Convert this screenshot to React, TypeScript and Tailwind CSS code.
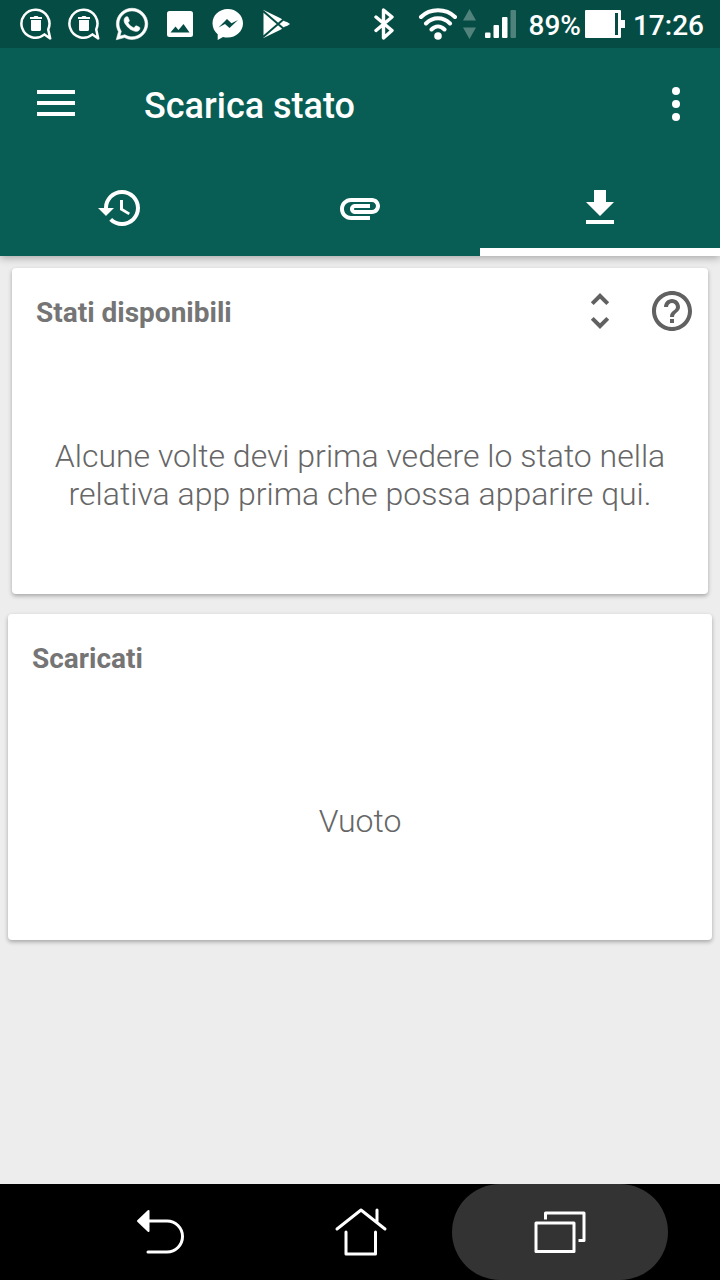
import { useState } from 'react'
import type { ReactNode } from 'react'
import { FaWhatsapp } from 'react-icons/fa'

interface Tab {
  id: string
  label: string
  path: string
}

const TABS: Tab[] = [
  {
    id: 'history',
    label: 'Cronologia',
    path: 'M13 3c-4.97 0-9 4.03-9 9H1l3.89 3.89.07.14L9 12H6c0-3.87 3.13-7 7-7s7 3.13 7 7-3.13 7-7 7c-1.93 0-3.68-.79-4.94-2.06l-1.42 1.42C8.27 19.99 10.51 21 13 21c4.97 0 9-4.03 9-9s-4.03-9-9-9zm-1 5v5l4.28 2.54.72-1.21-3.5-2.08V8H12z',
  },
  {
    id: 'attachments',
    label: 'Allegati',
    path: 'M2 12.5C2 9.46 4.46 7 7.5 7H18c2.21 0 4 1.79 4 4s-1.79 4-4 4H9.5C8.12 15 7 13.88 7 12.5S8.12 10 9.5 10H17v2H9.41c-.55 0-.55 1 0 1H18c1.1 0 2-.9 2-2s-.9-2-2-2H7.5C5.57 9 4 10.57 4 12.5S5.57 16 7.5 16H17v2H7.5C4.46 18 2 15.54 2 12.5z',
  },
  {
    id: 'download',
    label: 'Scarica',
    path: 'M19 9h-4V3H9v6H5l7 7 7-7zM5 18v2h14v-2H5z',
  },
]

const UNFOLD =
  'M12 5.83L15.17 9l1.41-1.41L12 3 7.41 7.59 8.83 9 12 5.83zm0 12.34L8.83 15l-1.41 1.41L12 21l4.59-4.59L15.17 15 12 18.17z'
const HELP =
  'M11 18h2v-2h-2v2zm1-16C6.48 2 2 6.48 2 12s4.48 10 10 10 10-4.48 10-10S17.52 2 12 2zm0 18c-4.41 0-8-3.59-8-8s3.59-8 8-8 8 3.59 8 8-3.59 8-8 8zm0-14c-2.21 0-4 1.79-4 4h2c0-1.1.9-2 2-2s2 .9 2 2c0 2-3 1.75-3 5h2c0-2.25 3-2.5 3-5 0-2.21-1.79-4-4-4z'

function Icon({ path }: { path: string }) {
  return (
    <svg className="size-12" viewBox="0 0 24 24" fill="currentColor">
      <path d={path} />
    </svg>
  )
}

function TrashBubble() {
  return (
    <svg className="size-8" viewBox="0 0 32 32" fill="none">
      <path
        d="M24.5 26.4A14 14 0 1 1 28.2 21.5L30.2 30.4Z"
        stroke="currentColor"
        strokeWidth="2.5"
        strokeLinejoin="round"
      />
      <path
        d="M10 9h3.5l1-1h3l1 1H22v2H10zM11 12h10v9.500a1.500 1.500 0 0 1-1.500 1.500h-7a1.500 1.500 0 0 1-1.500-1.500z"
        fill="currentColor"
      />
    </svg>
  )
}

function StatusBar() {
  return (
    <div className="flex h-12 items-center justify-between bg-[#054d44] pl-5 pr-4 text-white">
      <div className="flex items-center gap-4">
        <TrashBubble />
        <TrashBubble />
        <span className="flex size-8 items-center justify-center">
          <FaWhatsapp className="size-9 shrink-0" stroke="currentColor" strokeWidth="8" />
        </span>
        <svg className="size-8" viewBox="0 0 32 32" fill="currentColor">
          <path
            fillRule="evenodd"
            d="M5.500 3h21a2.500 2.500 0 0 1 2.500 2.500v21a2.500 2.500 0 0 1-2.500 2.500h-21a2.500 2.500 0 0 1-2.500-2.500v-21a2.500 2.500 0 0 1 2.500-2.500zM6.500 24.500h19l-6-8.500-5 6-3-3.500z"
          />
        </svg>
        <svg className="size-8" viewBox="0 0 32 32" fill="currentColor">
          <path
            fillRule="evenodd"
            d="M15.7 1C7 1 .5 7.500.5 15.300c0 4.700 2 8.400 5.200 10.900V32l5.300-3c1.500.4 3 .6 4.700.6C24.300 29.600 31 23.200 31 15.300S24.300 1 15.700 1zM6.500 19.500l8.500-8.500 4.500 4.300 6.500-3.300-8.500 8-4.500-4z"
          />
        </svg>
        <svg className="size-8" viewBox="0 0 32 32">
          <path d="M3.500 2v28l17.500-8.500 4-3 2-.5 3-2-3-2-2-.5-4-3z" fill="currentColor" />
          <path d="M3 3l21.500 18.500M3 29L24.500 10.500" stroke="#054d44" strokeWidth="2" />
        </svg>
      </div>

      <div className="flex items-center text-[28px] font-medium leading-8">
        <svg
          className="mr-5 h-8 w-7"
          viewBox="-1 0 28 32"
          fill="none"
          stroke="currentColor"
          strokeWidth="3.400"
          strokeLinejoin="round"
          strokeLinecap="round"
        >
          <path d="M6 9L22 22.500l-8.500 7.500V2L22 9 6 22.500" />
        </svg>
        <svg
          className="mr-1 h-8 w-10"
          viewBox="-1 0 40 32"
          fill="none"
          stroke="currentColor"
          strokeWidth="4"
          strokeLinecap="round"
        >
          <path d="M3 9c9-9 25-9 34 0M8 15.500c7-7 17-7 24 0M13.500 21.500c4-4 9-4 13 0" />
          <circle cx="20" cy="28" r="3.800" fill="currentColor" stroke="none" />
        </svg>
        <svg className="mr-2 h-8 w-4 opacity-30" viewBox="-1 0 16 32" fill="currentColor">
          <path d="M7.500 1L14 12.500H1zM1 19.500h13L7.500 31z" />
        </svg>
        <svg className="mr-3 h-8 w-8" viewBox="1 0 32 32" fill="currentColor">
          <rect x="1" y="24.500" width="5.500" height="5.500" rx="1" />
          <rect x="9.500" y="17" width="5.500" height="13" rx="1" />
          <rect x="18" y="9" width="5.500" height="21" rx="1" />
          <rect x="26.500" y="2" width="5.500" height="28" rx="1" opacity=".3" />
        </svg>
        <span className="pt-1">89%</span>
        <svg className="ml-1 mr-2 h-8 w-10" viewBox="0 0 40 32" fill="currentColor">
          <path
            fillRule="evenodd"
            d="M1 2h34a1 1 0 0 1 1 1v9h4v8h-4v9a1 1 0 0 1-1 1H1a1 1 0 0 1-1-1V3a1 1 0 0 1 1-1zM30 5v22h3V5z"
          />
        </svg>
        <span className="pt-1">17:26</span>
      </div>
    </div>
  )
}

interface CardProps {
  title: string
  actions?: ReactNode
  children: ReactNode
}

function Card({ title, actions, children }: CardProps) {
  return (
    <section className="rounded bg-white shadow-[0_2px_4px_rgba(0,0,0,0.3)]">
      <div className="flex h-[88px] items-center justify-between pb-0.5 pl-6 pr-3">
        <h2 className="pt-1 text-[28px] font-bold leading-8 text-[#757575]">{title}</h2>
        {actions}
      </div>
      <div className="flex min-h-[238px] items-center justify-center px-8">
        <p className="text-center text-[32px] font-light leading-[38px] text-[#666666]">{children}</p>
      </div>
    </section>
  )
}

function NavigationBar() {
  return (
    <nav className="mt-auto grid h-24 grid-cols-3 bg-black px-[60px] text-white">
      <button type="button" aria-label="Indietro" className="flex items-center justify-center">
        <svg className="size-14" viewBox="0 0 56 56" fill="none" stroke="currentColor" strokeWidth="3" strokeLinecap="round">
          <path d="M17 17h18a15.500 15.500 0 0 1 0 31H16" />
          <path d="M6 17L16.500 7v20z" fill="currentColor" strokeWidth="2" strokeLinejoin="round" />
        </svg>
      </button>
      <button type="button" aria-label="Home" className="flex items-center justify-center">
        <svg
          className="size-14"
          viewBox="0 0 56 56"
          fill="none"
          stroke="currentColor"
          strokeWidth="3"
          strokeLinecap="round"
          strokeLinejoin="round"
        >
          <path d="M5 25l24-19 24 19M45 6v12M14 28v22h29.500V28" />
        </svg>
      </button>
      <button type="button" aria-label="App recenti" className="-mx-2 flex items-center justify-center rounded-full bg-[#333333]">
        <svg className="size-14" viewBox="0 0 56 56" fill="none" stroke="currentColor" strokeWidth="3" strokeLinejoin="round">
          <rect x="4" y="19" width="38" height="28.500" />
          <path d="M13.500 15.500V9h38.500v27.500h-5.500" />
        </svg>
      </button>
    </nav>
  )
}

export default function App() {
  const [activeTab, setActiveTab] = useState('download')

  return (
    <div className="flex min-h-screen flex-col bg-[#ededed] font-[Roboto,sans-serif]">
      <header className="relative bg-[#085e54] text-white shadow-[0_2px_8px_rgba(0,0,0,0.3)]">
        <StatusBar />
        <div className="flex h-28 items-center pl-8 pr-5">
          <button type="button" aria-label="Menu" className="mr-16">
            <svg className="size-12" viewBox="0 0 48 48" fill="currentColor">
              <path d="M5 10h38v4H5zM5 21h38v4H5zM5 32h38v4H5z" />
            </svg>
          </button>
          <h1 className="flex-1 pt-1 text-4xl font-medium">Scarica stato</h1>
          <button type="button" aria-label="Altre opzioni">
            <svg className="size-12" viewBox="0 0 48 48" fill="currentColor">
              <circle cx="24" cy="11" r="4" />
              <circle cx="24" cy="24" r="4" />
              <circle cx="24" cy="37" r="4" />
            </svg>
          </button>
        </div>
        <div role="tablist" className="grid h-24 grid-cols-3">
          {TABS.map((tab) => (
            <button
              key={tab.id}
              type="button"
              role="tab"
              aria-label={tab.label}
              aria-selected={activeTab === tab.id}
              onClick={() => setActiveTab(tab.id)}
              className={`flex items-center justify-center border-b-8 pt-2 ${
                activeTab === tab.id ? 'border-white' : 'border-transparent'
              }`}
            >
              <Icon path={tab.path} />
            </button>
          ))}
        </div>
      </header>

      <main className="flex flex-col gap-5 px-2 py-3">
        <div className="px-1">
          <Card
            title="Stati disponibili"
            actions={
              <div className="flex gap-6 text-[#616161]">
                <button type="button" aria-label="Espandi">
                  <Icon path={UNFOLD} />
                </button>
                <button type="button" aria-label="Aiuto">
                  <Icon path={HELP} />
                </button>
              </div>
            }
          >
            Alcune volte devi prima vedere lo stato nella relativa app prima che possa apparire qui.
          </Card>
        </div>
        <Card title="Scaricati">Vuoto</Card>
      </main>

      <NavigationBar />
    </div>
  )
}
